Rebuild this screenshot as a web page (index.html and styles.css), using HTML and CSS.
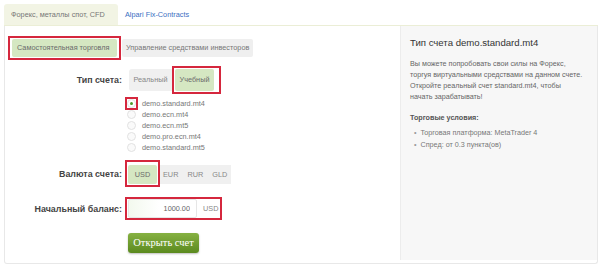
FILE: index.html
```html
<!DOCTYPE html>
<html lang="ru">
<head>
	<meta charset="UTF-8">
	<title>Открыть счет</title>
	<link rel="stylesheet" href="styles.css">
</head>
<body>
	<div class="page">
		<div class="tabs">
			<div class="tab active">Форекс, металлы спот, CFD</div>
			<div class="tab">Alpari Fix-Contracts</div>
		</div>

		<div class="panel">
			<div class="main">
				<div class="modes">
					<span class="mark mode-mark"><span class="seg on">Самостоятельная торговля</span></span>
					<span class="seg">Управление средствами инвесторов</span>
				</div>

				<div class="row type-row">
					<div class="lbl">Тип счета:</div>
					<div class="type-group">
						<span class="opt">Реальный</span>
						<span class="mark type-mark"><span class="opt on">Учебный</span></span>
					</div>
				</div>

				<ul class="radios">
					<li><span class="rbox marked"><span class="radio checked"></span></span>demo.standard.mt4</li>
					<li><span class="rbox"><span class="radio"></span></span>demo.ecn.mt4</li>
					<li><span class="rbox"><span class="radio"></span></span>demo.ecn.mt5</li>
					<li><span class="rbox"><span class="radio"></span></span>demo.pro.ecn.mt4</li>
					<li><span class="rbox"><span class="radio"></span></span>demo.standard.mt5</li>
				</ul>

				<div class="row cur-row">
					<div class="lbl">Валюта счета:</div>
					<span class="mark cur-mark"><span class="opt on">USD</span></span>
					<div class="cur-group">
						<span class="opt">EUR</span>
						<span class="opt">RUR</span>
						<span class="opt">GLD</span>
					</div>
				</div>

				<div class="row bal-row">
					<div class="lbl">Начальный баланс:</div>
					<div class="mark balance">
						<input type="text" value="1000.00">
						<span class="unit">USD</span>
					</div>
				</div>

				<div class="submit-row">
					<button type="button">Открыть счет</button>
				</div>
			</div>

			<div class="info">
				<h3>Тип счета demo.standard.mt4</h3>
				<p>Вы можете попробовать свои силы на Форекс,<br>торгуя виртуальными средствами на данном счете.<br>Откройте реальный счет standard.mt4, чтобы<br>начать зарабатывать!</p>
				<h4>Торговые условия:</h4>
				<ul>
					<li>Торговая платформа: MetaTrader 4</li>
					<li>Спред: от 0.3 пункта(ов)</li>
				</ul>
			</div>
		</div>
	</div>
</body>
</html>
```

FILE: styles.css
```css
* {
	box-sizing: border-box;
}
body {
	margin: 0;
	background: #fff;
	font-family: "Liberation Sans", Arial, sans-serif;
	color: #555;
}
.page {
	padding: 4px 2px 0 4px;
}
.tabs {
	display: flex;
	height: 22px;
	border-bottom: 1px solid #ebeed6;
}
.tab {
	padding: 0 7px;
	font-size: 7.3px;
	line-height: 22px;
	color: #3b6fc2;
	border-radius: 3px 3px 0 0;
}
.tab.active {
	width: 114px;
	background: #f2f4e4;
	color: #777;
}
.panel {
	display: flex;
	height: 238px;
	border: 1px solid #e8e8e8;
	border-top: none;
	border-radius: 0 0 3px 3px;
}
.main {
	flex: 1;
	padding: 10px 0 0 3px;
}

/* red annotation frames */
.mark {
	display: inline-flex;
	align-items: center;
	flex: none;
	border: 2px solid #d5273d;
	background: #fff;
}

.modes {
	display: flex;
	align-items: center;
	gap: 1px;
}
.mode-mark {
	padding: 1px 2px;
}
.seg {
	height: 18px;
	padding: 0 4px;
	font-size: 7.3px;
	line-height: 18px;
	color: #777;
	background: #efefef;
	border-radius: 2px;
}
.seg.on {
	width: 105px;
	padding: 0 5px;
	background: #d5e7c2;
	color: #6b6b6b;
}
.row {
	display: flex;
	align-items: center;
}
.lbl {
	width: 114px;
	flex: none;
	text-align: right;
	font-size: 8.9px;
	font-weight: bold;
	color: #444;
}
.opt {
	padding: 0 4px;
	font-size: 7.3px;
	color: #888;
	background: #f0f0f0;
}
.opt.on {
	background: #d5e7c2;
	color: #6b6b6b;
	border-radius: 2px;
}
.type-row {
	margin-top: 6px;
}
.type-group {
	display: flex;
	align-items: center;
	margin-left: 7px;
}
.type-group > .opt {
	width: 43px;
	height: 22px;
	line-height: 22px;
	border-radius: 3px 0 0 3px;
	text-align: center;
}
.type-mark {
	padding: 1px 5px 1px 1px;
}
.type-mark .opt {
	width: 39px;
	height: 22px;
	line-height: 22px;
	text-align: center;
}
.radios {
	list-style: none;
	margin: 4px 0 0 117px;
	padding: 0;
}
.radios li {
	display: flex;
	align-items: center;
	height: 11px;
	font-size: 7.3px;
	color: #777;
}
.rbox {
	flex: none;
	width: 13px;
	height: 13px;
	margin-right: 4px;
	border: 2px solid transparent;
}
.rbox.marked {
	border-color: #d5273d;
}
.radio {
	display: flex;
	align-items: center;
	justify-content: center;
	width: 9px;
	height: 9px;
	border: 1px solid #e2e2e2;
	border-radius: 50%;
	background: #fafafa;
}
.radio.checked {
	background: #fff;
}
.radio.checked::after {
	content: "";
	width: 3px;
	height: 3px;
	border-radius: 50%;
	background: #4d9b2a;
}
.cur-row {
	margin-top: 7px;
}
.cur-mark {
	margin-left: 3px;
	padding: 3px 1px 1px;
}
.cur-mark .opt {
	width: 29px;
	height: 19px;
	line-height: 19px;
	text-align: center;
}
.cur-group {
	display: flex;
	margin-top: 2px;
	height: 19px;
	background: #f0f0f0;
	border-radius: 0 3px 3px 0;
}
.cur-group .opt {
	line-height: 19px;
	padding: 0 4px 0 3px;
}
.cur-group .opt + .opt {
	padding-left: 5px;
}
.bal-row {
	margin-top: 10px;
}
.balance {
	margin-left: 3px;
	padding: 0 2px 0 1px;
}
.balance input {
	flex: none;
	width: 69px;
	height: 19px;
	padding: 0 6px;
	border: 1px solid #e6e6e6;
	border-radius: 2px;
	font-family: inherit;
	font-size: 7.3px;
	text-align: right;
	color: #666;
	background: linear-gradient(to right, #f3f9ee, #fff 45%);
}
.unit {
	flex: none;
	margin-left: 6px;
	font-size: 7.3px;
	color: #888;
}
.submit-row {
	margin: 12px 0 0 120px;
}
button {
	width: 71px;
	height: 20px;
	padding: 0;
	border: none;
	border-radius: 3px;
	background: linear-gradient(#86b142, #5b8a1f);
	color: #fff;
	font-family: "Liberation Serif", "Times New Roman", serif;
	font-size: 10.5px;
	box-shadow: 0 1px 2px rgba(0, 0, 0, 0.25);
}
.info {
	width: 197px;
	margin-bottom: 3px;
	padding: 11px 9px 0 9px;
	background: #f7f7f7;
	border-left: 1px solid #ececec;
}
.info h3 {
	margin: 0;
	font-size: 9.6px;
	line-height: 11px;
	font-weight: normal;
	color: #333;
}
.info p {
	margin: 10px 0 0;
	font-size: 7.2px;
	line-height: 11px;
	color: #666;
}
.info h4 {
	margin: 10px 0 0;
	font-size: 7.2px;
	line-height: 11px;
	color: #555;
}
.info ul {
	margin: 4px 0 0;
	padding: 0 0 0 4px;
	list-style: none;
}
.info li {
	font-size: 7.2px;
	line-height: 12px;
	color: #777;
}
.info li::before {
	content: "•";
	margin-right: 4px;
	color: #999;
}
```
